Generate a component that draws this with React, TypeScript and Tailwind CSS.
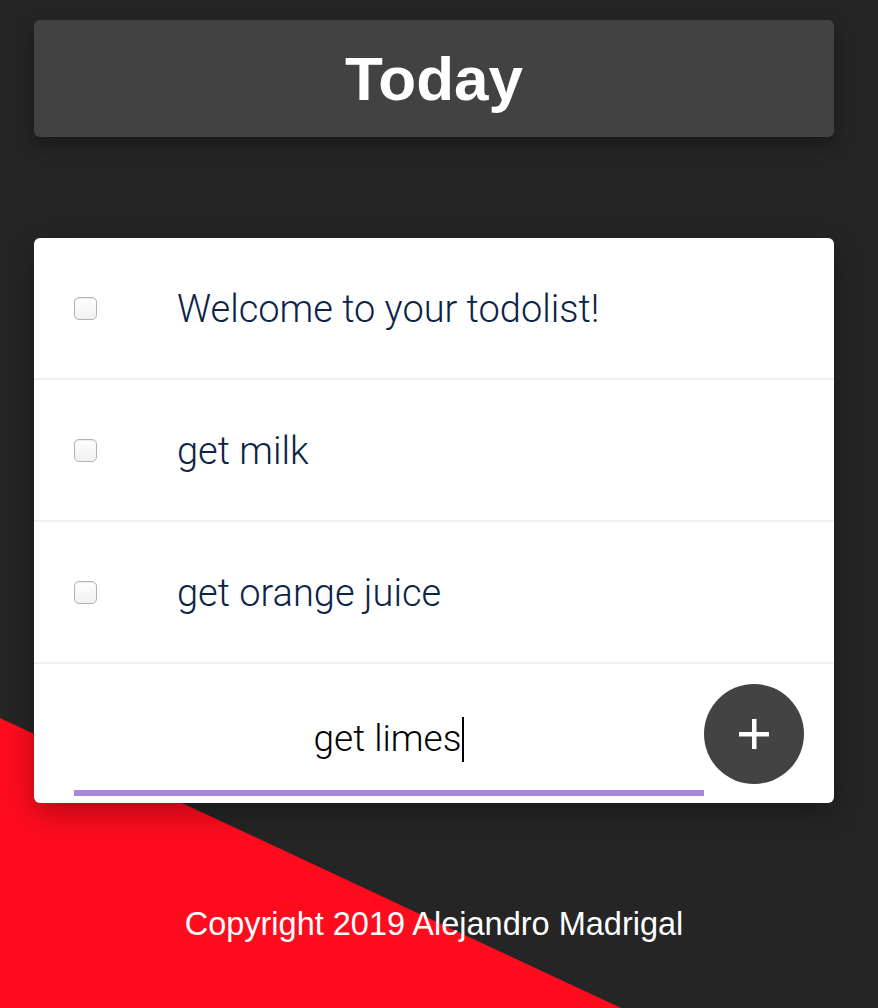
import { useState } from "react";

const todos = ["Welcome to your todolist!", "get milk", "get orange juice"];

function TodoRow({ text }: { text: string }) {
  return (
    <div className="flex h-[142px] items-center gap-[80px] border-b-2 border-[#efefef] pl-[40px]">
      <input
        type="checkbox"
        className="h-[23px] w-[23px] shrink-0 appearance-none rounded-[5px] border border-[#b3b3b3] bg-gradient-to-b from-white to-[#f1f1f1] shadow-[inset_0_1px_1px_rgba(0,0,0,0.08)]"
      />
      <p className="mt-[3px] font-['Roboto',sans-serif] text-[38px] font-light text-[#0b2448]">{text}</p>
    </div>
  );
}

export default function App() {
  const [item] = useState("get limes");

  return (
    <div className="relative min-h-[1008px] overflow-hidden bg-[#252525] font-['Liberation_Sans',Arial,sans-serif]">
      {/* red corner */}
      <svg className="absolute inset-0 h-[1008px] w-[878px]" viewBox="0 0 878 1008">
        <polygon points="0,718 621,1008 0,1008" fill="#fe0c1e" />
      </svg>

      <div className="relative ml-[34px] w-[800px] pt-[20px]">
        <div className="flex h-[117px] items-center justify-center rounded-[6px] bg-[#424242] shadow-[0_8px_20px_rgba(0,0,0,0.35)]">
          <h1 className="text-[62px] font-bold text-white">Today</h1>
        </div>

        <div className="mt-[101px] overflow-hidden rounded-[6px] bg-white shadow-[0_10px_30px_rgba(0,0,0,0.3)]">
          {todos.map((t) => (
            <TodoRow key={t} text={t} />
          ))}
          <form
            className="flex items-start pb-[7px] pl-[40px] pr-[30px] pt-[20px]"
            onSubmit={(e) => e.preventDefault()}
          >
            {/* input with the caret drawn after the text */}
            <div className="flex h-[112px] flex-1 items-center justify-center border-b-[6px] border-[#a887dc] pt-[4px]">
              <span className="font-['Roboto',sans-serif] text-[37px] font-light text-black">{item}</span>
              <span className="ml-[1px] h-[45px] w-[2px] bg-black" />
            </div>
            <button
              type="submit"
              className="flex h-[100px] w-[100px] items-center justify-center rounded-full bg-[#434343]"
            >
              <svg width="30" height="30" viewBox="0 0 30 30">
                <rect x="13" y="0" width="4.5" height="30" fill="white" />
                <rect x="0" y="13" width="30" height="4.5" fill="white" />
              </svg>
            </button>
          </form>
        </div>

        <p className="mt-[97px] text-center text-[32.5px] text-white">Copyright 2019 Alejandro Madrigal</p>
      </div>
    </div>
  );
}
